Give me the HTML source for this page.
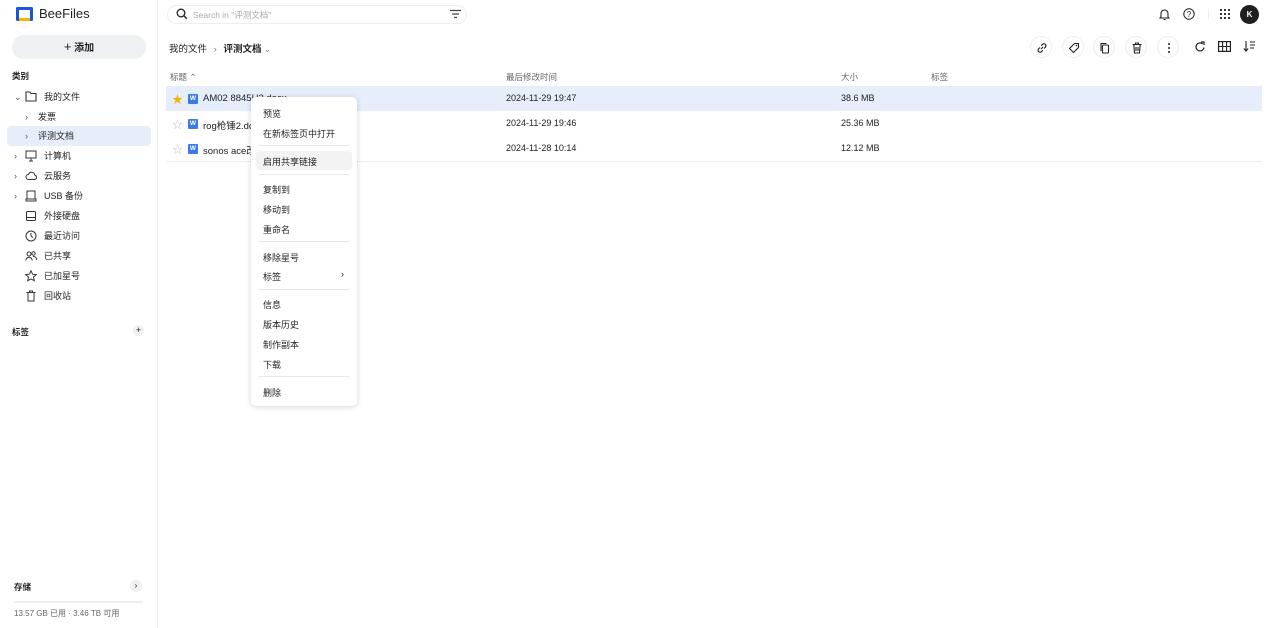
<!DOCTYPE html>
<html><head><meta charset="utf-8"><style>
*{margin:0;padding:0;box-sizing:border-box}
body{width:1269px;height:628px;background:#fff;font-family:"Liberation Sans","Noto Sans CJK SC",sans-serif;font-size:9px;color:#222;position:relative;overflow:hidden}
.a{position:absolute;white-space:nowrap}
.side{position:absolute;left:0;top:0;width:158px;height:628px;border-right:1px solid #eee}
.si{position:absolute;left:0;width:158px;height:20px;line-height:20px}
.si svg{position:absolute;top:4px}
.si .t{position:absolute;left:44px}
.chev{position:absolute;left:14px;top:0;color:#555;font-size:9px}
.cm{position:absolute;left:251px;top:97px;width:106px;height:309px;background:#fff;border-radius:5px;box-shadow:0 1px 6px rgba(0,0,0,.18)}
.cm div.i{position:absolute;left:12px;font-size:9px;color:#222}
.cm .d{position:absolute;left:8px;right:8px;height:1px;background:#e8e8e8}
.ib{position:absolute;top:36px;width:22px;height:22px;border-radius:50%;border:1px solid #eee}
.ib svg{position:absolute;left:5px;top:5px}
.w{position:absolute;left:188px;width:10px;height:10px;background:#3b7be8;border-radius:1px;color:#fff;font-size:6.5px;text-align:center;line-height:10px;font-weight:bold}
</style></head><body>
<div class="side">
 <svg class="a" style="left:16px;top:6px" width="17" height="16" viewBox="0 0 17 16"><rect x="0" y="1" width="17" height="14" rx="1.5" fill="#1a56db"/><rect x="3" y="4" width="11" height="8" fill="#fff"/><rect x="3" y="12" width="11" height="3" fill="#f5b400"/></svg>
 <div class="a" style="left:39px;top:6px;font-size:13px;color:#222">BeeFiles</div>
 <div class="a" style="left:12px;top:35px;width:134px;height:24px;border-radius:12px;background:#eef0f3;text-align:center;line-height:24px;font-size:10px;font-weight:bold"><span style="font-size:13px;font-weight:normal">+</span> 添加</div>
 <div class="a" style="left:12px;top:70px;font-weight:bold;font-size:8.5px">类别</div>
 <div class="a" style="left:7px;top:126px;width:144px;height:20px;border-radius:4px;background:#e7eefb"></div>
 <div class="si" style="top:87px"><span class="chev">⌄</span><svg style="left:25px" width="12" height="11" viewBox="0 0 12 11"><path d="M1 1h4l1 1.5h5v7.5H1z" fill="none" stroke="#333" stroke-width="1.1"/></svg><span class="t">我的文件</span></div>
 <div class="si" style="top:107px"><span class="chev" style="left:25px">›</span><span class="t" style="left:38px">发票</span></div>
 <div class="si" style="top:126px"><span class="chev" style="left:25px">›</span><span class="t" style="left:38px">评测文档</span></div>
 <div class="si" style="top:146px"><span class="chev">›</span><svg style="left:25px" width="12" height="12" viewBox="0 0 12 12"><rect x="1" y="1" width="10" height="7" fill="none" stroke="#333"/><path d="M4 11h4M6 8v3" stroke="#333"/></svg><span class="t">计算机</span></div>
 <div class="si" style="top:166px"><span class="chev">›</span><svg style="left:25px" width="13" height="12" viewBox="0 0 13 12"><path d="M3.5 9.5a2.5 2.5 0 0 1 0-5 3.2 3.2 0 0 1 6.2 0.5 2.3 2.3 0 0 1 0 4.5z" fill="none" stroke="#333"/></svg><span class="t">云服务</span></div>
 <div class="si" style="top:186px"><span class="chev">›</span><svg style="left:25px" width="12" height="12" viewBox="0 0 12 12"><path d="M2 1h8v8H2zM1 9h10v2H1z" fill="none" stroke="#333"/></svg><span class="t">USB 备份</span></div>
 <div class="si" style="top:206px"><svg style="left:25px" width="12" height="12" viewBox="0 0 12 12"><rect x="1.5" y="1.5" width="9" height="9" rx="1" fill="none" stroke="#333"/><path d="M1.5 7.5h9" stroke="#333"/></svg><span class="t">外接硬盘</span></div>
 <div class="si" style="top:226px"><svg style="left:25px" width="12" height="12" viewBox="0 0 12 12"><circle cx="6" cy="6" r="5" fill="none" stroke="#333"/><path d="M6 3v3l2 1.5" fill="none" stroke="#333"/></svg><span class="t">最近访问</span></div>
 <div class="si" style="top:246px"><svg style="left:25px" width="12" height="12" viewBox="0 0 12 12"><circle cx="4" cy="4" r="2" fill="none" stroke="#333"/><circle cx="8.5" cy="3.5" r="1.7" fill="none" stroke="#333"/><path d="M0.8 10.5a3.2 3.2 0 0 1 6.4 0M8 6.5a3 3 0 0 1 3.5 3.5" fill="none" stroke="#333"/></svg><span class="t">已共享</span></div>
 <div class="si" style="top:266px"><svg style="left:25px" width="12" height="12" viewBox="0 0 12 12"><path d="M6 .8l1.6 3.4 3.6.4-2.7 2.5.8 3.6L6 8.9 2.7 10.7l.8-3.6L.8 4.6l3.6-.4z" fill="none" stroke="#333"/></svg><span class="t">已加星号</span></div>
 <div class="si" style="top:286px"><svg style="left:25px" width="12" height="12" viewBox="0 0 12 12"><path d="M1.5 2.5h9M4.5 2.5V1h3v1.5M3 2.5v8.5h6V2.5" fill="none" stroke="#333"/></svg><span class="t">回收站</span></div>
 <div class="a" style="left:12px;top:326px;font-weight:bold;font-size:8.5px">标签</div>
 <div class="a" style="left:133px;top:325px;width:11px;height:11px;border-radius:50%;background:#f0f0f0;text-align:center;line-height:11px;font-size:9px">+</div>
 <div class="a" style="left:14px;top:581px;font-weight:bold;font-size:8.5px">存储</div>
 <div class="a" style="left:130px;top:580px;width:12px;height:12px;border-radius:50%;background:#f0f0f0;text-align:center;line-height:11px;font-size:8px">›</div>
 <div class="a" style="left:14px;top:601px;width:129px;height:2px;background:#eee"></div>
 <div class="a" style="left:14px;top:608px;font-size:8px;color:#666">13.57 GB 已用 · 3.46 TB 可用</div>
</div>

<div class="a" style="left:167px;top:5px;width:300px;height:19px;border:1px solid #eee;border-radius:10px"></div>
<svg class="a" style="left:176px;top:8px" width="12" height="12" viewBox="0 0 12 12"><circle cx="5" cy="5" r="3.8" fill="none" stroke="#222" stroke-width="1.3"/><path d="M7.8 7.8l3 3" stroke="#222" stroke-width="1.4"/></svg>
<div class="a" style="left:193px;top:9px;color:#aaa;font-size:8.5px">Search in "评测文档"</div>
<svg class="a" style="left:450px;top:9px" width="11" height="10" viewBox="0 0 11 10"><path d="M0 1.5h11M2 5h7M4 8.5h3" stroke="#444" stroke-width="1.2"/></svg>

<svg class="a" style="left:1159px;top:8px" width="11" height="13" viewBox="0 0 11 13"><path d="M2 9V5.5a3.5 3.5 0 0 1 7 0V9l1 1H1z M4.5 11.5h2" fill="none" stroke="#222" stroke-width="1.1"/></svg>
<svg class="a" style="left:1183px;top:8px" width="12" height="12" viewBox="0 0 12 12"><circle cx="6" cy="6" r="5.2" fill="none" stroke="#222"/><text x="6" y="8.8" font-size="8" text-anchor="middle" font-family="Liberation Sans" fill="#222">?</text></svg>
<div class="a" style="left:1208px;top:9px;width:1px;height:10px;background:#eee"></div>
<svg class="a" style="left:1220px;top:9px" width="10" height="10" viewBox="0 0 10 10" fill="#333"><rect x="0" y="0" width="2" height="2"/><rect x="4" y="0" width="2" height="2"/><rect x="8" y="0" width="2" height="2"/><rect x="0" y="4" width="2" height="2"/><rect x="4" y="4" width="2" height="2"/><rect x="8" y="4" width="2" height="2"/><rect x="0" y="8" width="2" height="2"/><rect x="4" y="8" width="2" height="2"/><rect x="8" y="8" width="2" height="2"/></svg>
<div class="a" style="left:1240px;top:5px;width:19px;height:19px;border-radius:50%;background:#1f1f1f;color:#fff;text-align:center;line-height:19px;font-size:8px;font-weight:bold">K</div>

<div class="a" style="left:169px;top:41px;font-size:9.5px">我的文件 <span style="color:#777;margin:0 4px">›</span> <b>评测文档</b> <span style="color:#777;font-size:8px">⌄</span></div>

<div class="ib" style="left:1030px"><svg width="12" height="12" viewBox="0 0 12 12"><path d="M5 7l2-2M4 5.5L2.5 7a2 2 0 0 0 2.8 2.8L6.8 8.3M8 6.5L9.5 5a2 2 0 0 0-2.8-2.8L5.2 3.7" fill="none" stroke="#222" stroke-width="1.1"/></svg></div>
<div class="ib" style="left:1062px"><svg width="12" height="12" viewBox="0 0 12 12"><path d="M6.5 1.5h4v4L5.5 10.5l-4-4z" fill="none" stroke="#222" stroke-width="1.1"/><circle cx="8.5" cy="3.5" r=".8" fill="#222"/></svg></div>
<div class="ib" style="left:1093px"><svg width="12" height="12" viewBox="0 0 12 12"><rect x="3.5" y="3" width="6" height="8" rx="1" fill="none" stroke="#222" stroke-width="1.1"/><path d="M2 9V1.5h5.5" fill="none" stroke="#222" stroke-width="1.1"/></svg></div>
<div class="ib" style="left:1125px"><svg width="12" height="12" viewBox="0 0 12 12"><path d="M1.5 2.5h9M4.5 2.5V1h3v1.5M2.8 2.5l.7 8.5h5l.7-8.5M5 5v4M7 5v4" fill="none" stroke="#222" stroke-width="1.1"/></svg></div>
<div class="ib" style="left:1157px"><svg width="12" height="12" viewBox="0 0 12 12" fill="#222"><circle cx="6" cy="2" r="1"/><circle cx="6" cy="6" r="1"/><circle cx="6" cy="10" r="1"/></svg></div>
<svg class="a" style="left:1194px;top:41px" width="12" height="12" viewBox="0 0 12 12"><path d="M10 6.5A4 4 0 1 1 8.8 3" fill="none" stroke="#222" stroke-width="1.2"/><path d="M7 1h3v3" fill="none" stroke="#222" stroke-width="1.2"/></svg>
<svg class="a" style="left:1218px;top:41px" width="13" height="11" viewBox="0 0 13 11"><rect x=".6" y=".6" width="11.8" height="9.8" fill="none" stroke="#222" stroke-width="1.2"/><path d="M.6 5.5h11.8M4.6.6v9.8M8.6.6v9.8" stroke="#222" stroke-width="1.1"/></svg>
<svg class="a" style="left:1243px;top:40px" width="13" height="12" viewBox="0 0 13 12"><path d="M3 1v10M.8 8.5L3 11l2.2-2.5M7 2h5M7 5h5M7 8h4" fill="none" stroke="#222" stroke-width="1.1"/></svg>

<div class="a" style="left:170px;top:71px;color:#666;font-size:8.5px">标题 ⌃</div>
<div class="a" style="left:506px;top:71px;color:#666;font-size:8.5px">最后修改时间</div>
<div class="a" style="left:841px;top:71px;color:#666;font-size:8.5px">大小</div>
<div class="a" style="left:931px;top:71px;color:#666;font-size:8.5px">标签</div>

<div class="a" style="left:166px;top:86px;width:1096px;height:25px;background:#e7eefb"></div>
<div class="a" style="left:166px;top:161px;width:1096px;height:1px;background:#eee"></div>

<div class="a" style="left:172px;top:91px;color:#f5b400;font-size:11px">★</div>
<div class="a" style="left:172px;top:116px;color:#ccc;font-size:11px">☆</div>
<div class="a" style="left:172px;top:141px;color:#ccc;font-size:11px">☆</div>
<div class="w" style="top:94px">W</div>
<div class="w" style="top:119px">W</div>
<div class="w" style="top:144px">W</div>
<div class="a" style="left:203px;top:93px;font-size:9.5px">AM02 8845U2.docx</div>
<div class="a" style="left:203px;top:118px;font-size:9.5px">rog枪锤2.docx</div>
<div class="a" style="left:203px;top:143px;font-size:9.5px">sonos ace改.docx</div>
<div class="a" style="left:506px;top:93px;font-size:9px">2024-11-29 19:47</div>
<div class="a" style="left:506px;top:118px;font-size:9px">2024-11-29 19:46</div>
<div class="a" style="left:506px;top:143px;font-size:9px">2024-11-28 10:14</div>
<div class="a" style="left:841px;top:93px;font-size:9px">38.6 MB</div>
<div class="a" style="left:841px;top:118px;font-size:9px">25.36 MB</div>
<div class="a" style="left:841px;top:143px;font-size:9px">12.12 MB</div>

<div class="cm">
 <div class="a" style="left:5px;top:54px;width:96px;height:19px;background:#f3f3f3;border-radius:4px"></div>
 <div class="i" style="top:10px">预览</div>
 <div class="i" style="top:30px">在新标签页中打开</div>
 <div class="d" style="top:48px"></div>
 <div class="i" style="top:58px">启用共享链接</div>
 <div class="d" style="top:77px"></div>
 <div class="i" style="top:86px">复制到</div>
 <div class="i" style="top:106px">移动到</div>
 <div class="i" style="top:126px">重命名</div>
 <div class="d" style="top:144px"></div>
 <div class="i" style="top:154px">移除星号</div>
 <div class="i" style="top:173px">标签</div>
 <div class="a" style="left:90px;top:172px;font-size:9px">›</div>
 <div class="d" style="top:192px"></div>
 <div class="i" style="top:201px">信息</div>
 <div class="i" style="top:221px">版本历史</div>
 <div class="i" style="top:241px">制作副本</div>
 <div class="i" style="top:261px">下载</div>
 <div class="d" style="top:279px"></div>
 <div class="i" style="top:289px">删除</div>
</div>
</body></html>
